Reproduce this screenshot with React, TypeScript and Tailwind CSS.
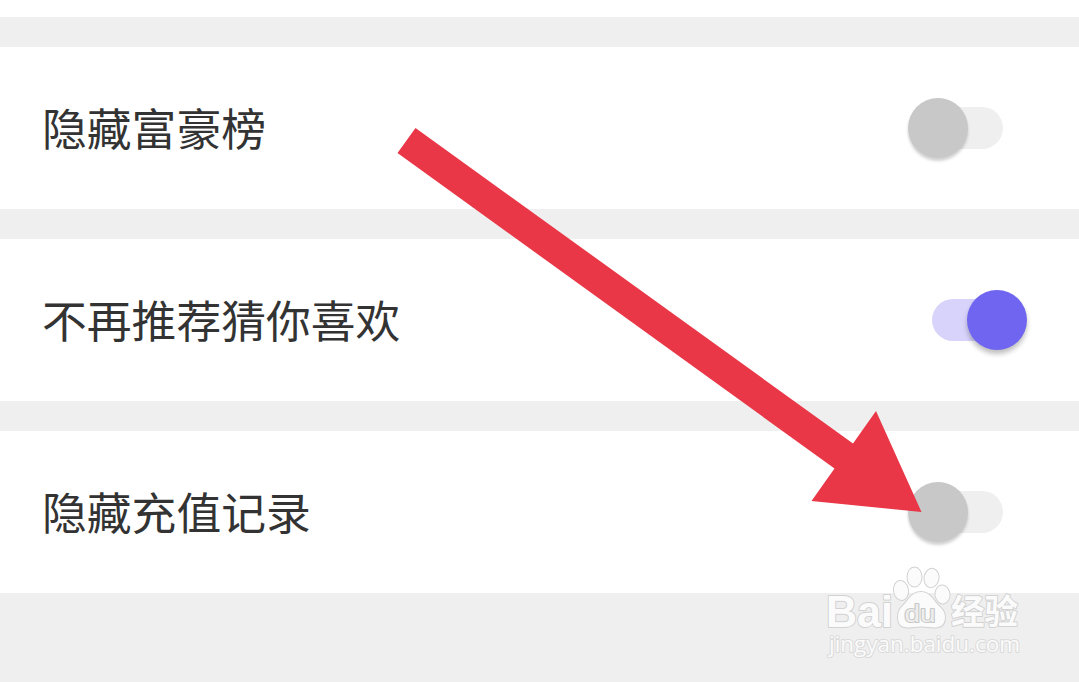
import clsx from "clsx";

const settings = [
  { label: "隐藏富豪榜", enabled: false },
  { label: "不再推荐猜你喜欢", enabled: true },
  { label: "隐藏充值记录", enabled: false },
];

const Toggle = ({ enabled }: { enabled: boolean }) => {
  return (
    <button
      type="button"
      role="switch"
      aria-checked={enabled}
      className="relative flex h-[60px] w-[119px] shrink-0 items-center justify-center"
    >
      <span
        className={clsx(
          "h-[42px] w-[71px] rounded-full",
          enabled ? "bg-[#d7d3fb]" : "bg-[#efefef]"
        )}
      />
      {/* the thumb hangs over the end of the track */}
      <span
        className={clsx(
          "absolute inset-y-0 size-[60px] rounded-full",
          enabled
            ? "right-0 bg-[#6f65f0] shadow-[0_4px_5px_rgba(0,0,0,0.25)]"
            : "left-0 bg-[#c8c8c8] shadow-[0_3px_3px_rgba(0,0,0,0.18)]"
        )}
      />
    </button>
  );
};

const Arrow = () => {
  return (
    <svg
      className="pointer-events-none absolute inset-0 size-full"
      viewBox="0 0 1079 682"
    >
      <path d="M415.500 128L397.500 153L834.500 468.500L811.500 501L921.500 512L876 411L853 443.500Z" fill="#e93747" />
    </svg>
  );
};

const Watermark = () => {
  return (
    <svg
      className="pointer-events-none absolute right-[49px] bottom-[17px]"
      width="210"
      height="105"
      viewBox="820 560 210 105"
      fill="#fbfbfb"
      stroke="#d2d2d2"
      strokeWidth="2"
      strokeLinejoin="round"
      paintOrder="stroke"
    >
      <text x="826" y="627" fontSize="44" fontWeight="700" textLength="67" lengthAdjust="spacingAndGlyphs" fontFamily="Liberation Sans, sans-serif">
        Bai
      </text>
      <g strokeWidth="2">
        <ellipse cx="901" cy="590.500" rx="7" ry="9.500" transform="rotate(-8 901 590.500)" />
        <ellipse cx="914.500" cy="577" rx="7" ry="9.500" />
        <ellipse cx="931.500" cy="578" rx="7" ry="9.200" transform="rotate(10 931.500 578)" />
        <ellipse cx="942.500" cy="594.500" rx="7" ry="9" transform="rotate(-8 942.500 594.500)" />
        <path d="M921 592C912 592 909 599 904 604.500C900 608.500 898 611 898 617C898 624 901 627.500 908 627.500C913 627.500 916 626.500 921 626.500C926 626.500 930 627.500 935 627.500C941 627.500 945 624 945 617C945 611 941 608 937 604C932 598 929 592 921 592Z" />
      </g>
      <text x="904.500" y="622" fontSize="23" textLength="31" lengthAdjust="spacingAndGlyphs" fontFamily="Liberation Sans, sans-serif" fill="#eeeeee" stroke="#c8c8c8">
        du
      </text>
      <text x="951" y="624" fontSize="34" fontWeight="700" textLength="67" lengthAdjust="spacingAndGlyphs" fontFamily="Noto Sans CJK SC, sans-serif">
        经验
      </text>
      <text x="829" y="652" fontSize="22.500" textLength="191" fontFamily="Open Sans, sans-serif" stroke="#dadada">
        jingyan.baidu.com
      </text>
    </svg>
  );
};

const App = () => {
  return (
    <main className="relative flex h-[682px] w-[1079px] flex-col gap-[30px] overflow-hidden bg-[#efefef] font-['Noto_Sans_CJK_SC',sans-serif]">
      <div className="h-[17px] bg-white" />
      {settings.map(({ label, enabled }) => (
        <div
          key={label}
          className="flex h-[162px] items-center justify-between bg-white pr-[52px] pl-[42px]"
        >
          <span className="pb-0.5 text-[44.8px] leading-none whitespace-nowrap text-[#333333]">
            {label}
          </span>
          <Toggle enabled={enabled} />
        </div>
      ))}
      <Arrow />
      <Watermark />
    </main>
  );
};

export default App;
